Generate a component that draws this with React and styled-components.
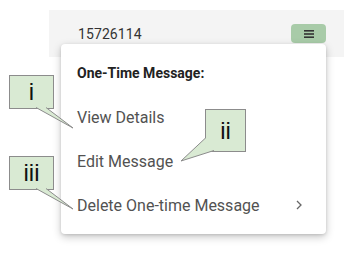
import React from 'react';
import styled, { createGlobalStyle } from 'styled-components';

const GlobalStyle = createGlobalStyle`
    html, body {
        margin: 0;
        padding: 0;
        background: #ffffff;
    }
    body {
        font-family: Roboto, "Noto Sans", sans-serif;
    }
`;

const Page = styled.div`
    position: relative;
    width: 344px;
    height: 258px;
    overflow: hidden;
    padding-top: 10px;
    box-sizing: border-box;
`;

const Header = styled.div`
    margin-left: 49px;
    height: 47px;
    background-color: #f4f4f4;
    display: flex;
    align-items: center;
    justify-content: space-between;
    padding: 0 18px 0 29px;
    box-sizing: border-box;
`;

const Id = styled.span`
    font-size: 14px;
    color: #333;
    letter-spacing: 0.1px;
`;

const MenuButton = styled.button`
    width: 35px;
    height: 19px;
    border: 0;
    border-radius: 4px;
    background-color: #a8cba8;
    display: flex;
    align-items: center;
    justify-content: center;
    padding: 0;
`;

const Menu = styled.div`
    position: absolute;
    left: 61px;
    top: 44px;
    width: 265px;
    padding: 7px 0;
    background: #fff;
    border-radius: 4px;
    box-shadow: 0 3px 8px rgba(0, 0, 0, 0.22), 0 1px 3px rgba(0, 0, 0, 0.12);
`;

const Row = styled.div`
    height: 44px;
    display: flex;
    align-items: center;
    justify-content: space-between;
    padding: 0 24px 0 16px;
    font-size: ${p => (p.$title ? '14px' : '16px')};
    font-weight: ${p => (p.$title ? 700 : 400)};
    color: ${p => (p.$title ? '#222' : '#525252')};
`;

const Callout = styled.div`
    position: absolute;
    left: ${p => p.$x}px;
    top: ${p => p.$y}px;
    width: ${p => p.$w}px;
    height: ${p => p.$h}px;
    box-sizing: border-box;
    border: 1px solid #8c8c8c;
    background-color: #d9ead3;
    display: flex;
    align-items: center;
    justify-content: center;
    font-family: "Liberation Sans", Arial, sans-serif;
    font-size: 24px;
    color: #111;
`;

const Tail = styled.svg`
    position: absolute;
    left: 0;
    top: 0;
    pointer-events: none;
`;

const Burger = () => (
    <svg width="10" height="8" viewBox="0 0 10 8">
        <rect x="0" y="0" width="10" height="1.6" fill="#333" />
        <rect x="0" y="3.2" width="10" height="1.6" fill="#333" />
        <rect x="0" y="6.4" width="10" height="1.6" fill="#333" />
    </svg>
);

const Chevron = () => (
    <svg width="6" height="10" viewBox="0 0 6 10">
        <path d="M1 1 L5 5 L1 9" fill="none" stroke="#666" strokeWidth="1.3" />
    </svg>
);

const tails = [
    '36,107.5 73,128 46,107.5',
    '205.5,138 181,161 214,150.5',
    '36,188.5 73,209 46,188.5',
];

export default function App() {
    return (
        <>
            <GlobalStyle />
            <Page>
                <Header>
                    <Id>15726114</Id>
                    <MenuButton>
                        <Burger />
                    </MenuButton>
                </Header>
                <Menu>
                    <Row $title>One-Time Message:</Row>
                    <Row>View Details</Row>
                    <Row>Edit Message</Row>
                    <Row>
                        Delete One-time Message
                        <Chevron />
                    </Row>
                </Menu>
                <Callout $x={9} $y={75} $w={45} $h={34}>i</Callout>
                <Callout $x={205} $y={109} $w={41} $h={43}>ii</Callout>
                <Callout $x={9} $y={156} $w={45} $h={34}>iii</Callout>
                <Tail width="344" height="258">
                    {tails.map((pts, i) => (
                        <g key={i}>
                            <polygon points={pts} fill="#d9ead3" />
                            <polyline points={pts} fill="none" stroke="#8c8c8c" strokeWidth="1" />
                        </g>
                    ))}
                </Tail>
            </Page>
        </>
    );
}
